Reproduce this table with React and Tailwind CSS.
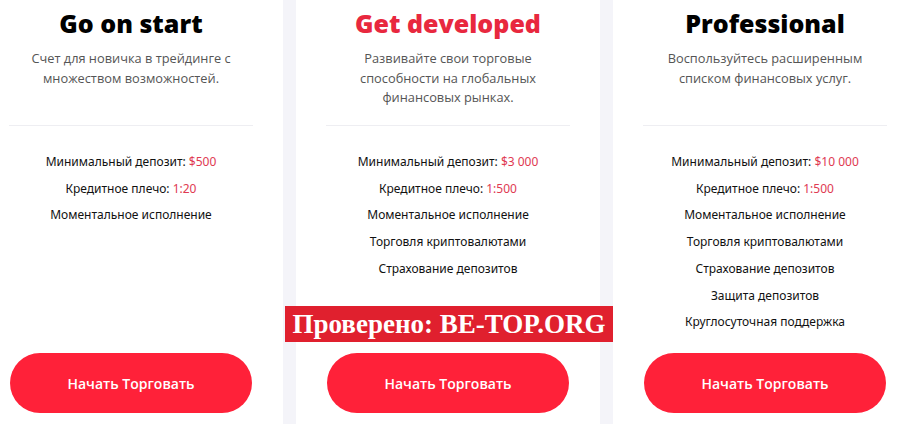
import React from "react";

const cards = [
  {
    title: "Go on start",
    red: false,
    desc: ["Счет для новичка в трейдинге с", "множеством возможностей."],
    deposit: "$500",
    lev: "1:20",
    extra: ["Моментальное исполнение"],
  },
  {
    title: "Get developed",
    red: true,
    desc: ["Развивайте свои торговые", "способности на глобальных", "финансовых рынках."],
    deposit: "$3 000",
    lev: "1:500",
    extra: ["Моментальное исполнение", "Торговля криптовалютами", "Страхование депозитов"],
  },
  {
    title: "Professional",
    red: false,
    desc: ["Воспользуйтесь расширенным", "списком финансовых услуг."],
    deposit: "$10 000",
    lev: "1:500",
    extra: [
      "Моментальное исполнение",
      "Торговля криптовалютами",
      "Страхование депозитов",
      "Защита депозитов",
      "Круглосуточная поддержка",
    ],
  },
];

function Card({ c }) {
  return (
    <div className="w-[304px] h-[424px] shrink-0 bg-white flex flex-col items-center">
      <h2
        className={`mt-[8px] text-[25px] leading-[31px] font-extrabold ${c.red ? "text-[#e8283e]" : "text-black"}`}
        style={{ fontFamily: '"Open Sans", sans-serif' }}
      >
        {c.title}
      </h2>
      <div
        className="mt-[10px] h-[76px] text-[12.8px] leading-[19.5px] text-[#555] text-center"
        style={{ fontFamily: '"Open Sans", sans-serif' }}
      >
        {c.desc.map((d, i) => (
          <div key={i}>{d}</div>
        ))}
      </div>
      <div className="w-[244px] h-px bg-[#eeeef2]" />
      <ul
        className="mt-[23px] text-[12px] leading-[26.7px] text-[#111] text-center"
        style={{ fontFamily: '"Noto Sans", sans-serif' }}
      >
        <li>
          Минимальный депозит: <span className="text-[#e03a52]">{c.deposit}</span>
        </li>
        <li>
          Кредитное плечо: <span className="text-[#e03a52]">{c.lev}</span>
        </li>
        {c.extra.map((e, i) => (
          <li key={i}>{e}</li>
        ))}
      </ul>
      <button
        className="mt-auto mb-[11px] w-[242px] h-[60px] rounded-full bg-[#ff2139] text-white text-[14px] font-semibold"
        style={{ fontFamily: '"Open Sans", sans-serif' }}
      >
        Начать Торговать
      </button>
    </div>
  );
}

export default function App() {
  return (
    <div className="relative w-[898px] h-[424px] overflow-hidden bg-[#f4f4f9]">
      <div className="flex gap-[13px] ml-[-21px]">
        {cards.map((c, i) => (
          <Card key={i} c={c} />
        ))}
      </div>
      <div
        className="absolute left-[285px] top-[306px] w-[328px] h-[36px] bg-[#e0202e] flex items-center justify-center text-white font-bold text-[27px]"
        style={{ fontFamily: '"Liberation Serif", serif' }}
      >
        Проверено: BE-TOP.ORG
      </div>
    </div>
  );
}
